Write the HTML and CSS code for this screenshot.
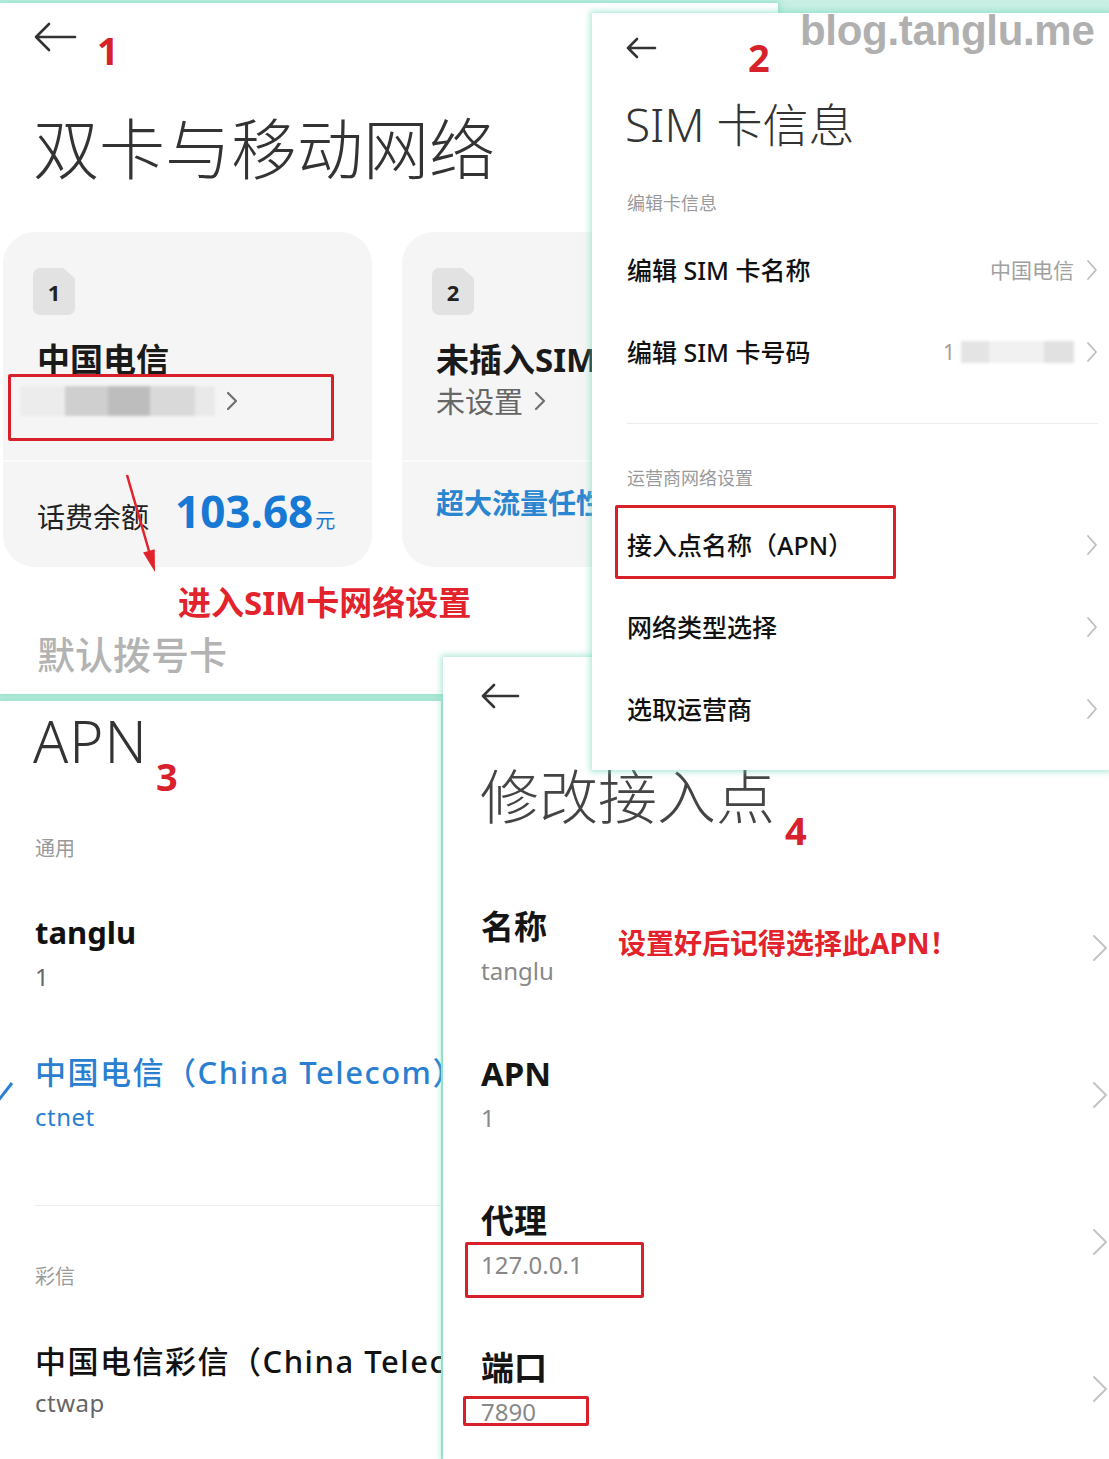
FILE: index.html
```html
<!DOCTYPE html>
<html lang="zh-CN">
<head>
  <meta charset="UTF-8" />
  <title>APN 设置步骤 - blog.tanglu.me</title>
  <meta name="viewport" content="width=device-width, initial-scale=1.0" />
  <link rel="stylesheet" href="styles.css">
</head>

<body>
  <div class="canvas">

    <!-- 1: 双卡与移动网络 -->
    <section class="panel p1">
      <div class="topbar">
        <svg class="back" width="44" height="30" viewBox="0 0 44 30"><path d="M42 15H3M16 2L3 15l13 13" /></svg>
      </div>
      <h1 class="big-title">双卡与移动网络</h1>

      <div class="cards">
        <div class="sim-card">
          <div class="sim-top">
            <div class="sim-badge">1</div>
            <div class="sim-name">中国电信</div>
            <div class="sim-sub">
              <span class="blur-num">
                <i style="width: 45px; background: #ececec"></i>
                <i style="width: 43px; background: #cfcfcf"></i>
                <i style="width: 42px; background: #bdbdbd"></i>
                <i style="width: 45px; background: #d9d9d9"></i>
                <i style="width: 20px; background: #e9e9e9"></i>
              </span>
              <svg class="chev dark" width="14" height="22" viewBox="0 0 14 22"><path d="M3 3l8 8-8 8" /></svg>
            </div>
          </div>
          <div class="sim-bottom">
            <span class="balance-label">话费余额</span>
            <span class="balance-value">103.68</span>
            <span class="balance-unit">元</span>
          </div>
        </div>

        <div class="sim-card">
          <div class="sim-top">
            <div class="sim-badge">2</div>
            <div class="sim-name">未插入SIM卡</div>
            <div class="sim-sub">
              <span class="sim-empty">未设置</span>
              <svg class="chev dark" width="14" height="22" viewBox="0 0 14 22"><path d="M3 3l8 8-8 8" /></svg>
            </div>
          </div>
          <div class="sim-bottom">
            <span class="promo">超大流量任性用</span>
          </div>
        </div>
      </div>

      <h2 class="section-faded">默认拨号卡</h2>

      <div class="step-no step-1">1</div>
      <div class="mark-box box-p1"></div>
      <svg class="mark-arrow" width="200" height="130" viewBox="0 0 200 130">
        <path class="shaft" d="M127 472L149 548" transform="translate(0 -450)" />
        <path class="head" d="M155 569L154.7 546.2 143.1 549.6Z" transform="translate(0 -450)" />
      </svg>
      <div class="mark-text text-p1">进入SIM卡网络设置</div>
    </section>

    <!-- 3: APN 列表 -->
    <section class="panel p3">
      <h1 class="apn-title">APN</h1>
      <div class="list-label first">通用</div>

      <div class="apn-item">
        <div class="apn-name">tanglu</div>
        <div class="apn-sub">1</div>
      </div>
      <div class="apn-item selected">
        <div class="apn-name">中国电信（China Telecom）</div>
        <div class="apn-sub">ctnet</div>
      </div>

      <div class="divider"></div>
      <div class="list-label second">彩信</div>

      <div class="apn-item mms">
        <div class="apn-name">中国电信彩信（China Telecom）</div>
        <div class="apn-sub">ctwap</div>
      </div>

      <svg class="check" width="14" height="24" viewBox="0 0 14 24"><path d="M-2 21L12 3" /></svg>
      <div class="step-no step-3">3</div>
    </section>

    <!-- 4: 修改接入点 -->
    <section class="panel p4">
      <div class="topbar">
        <svg class="back" width="40" height="26" viewBox="0 0 40 26"><path d="M38 13H3M14 2L3 13l11 11" /></svg>
      </div>
      <h1 class="edit-title">修改接入点</h1>

      <div class="field-list">
        <div class="field">
          <div class="field-text">
            <div class="field-name">名称</div>
            <div class="field-value">tanglu</div>
          </div>
          <svg class="chev big" width="18" height="28" viewBox="0 0 18 28"><path d="M3 2l12 12-12 12" /></svg>
        </div>
        <div class="field">
          <div class="field-text">
            <div class="field-name">APN</div>
            <div class="field-value">1</div>
          </div>
          <svg class="chev big" width="18" height="28" viewBox="0 0 18 28"><path d="M3 2l12 12-12 12" /></svg>
        </div>
        <div class="field">
          <div class="field-text">
            <div class="field-name">代理</div>
            <div class="field-value">127.0.0.1</div>
          </div>
          <svg class="chev big" width="18" height="28" viewBox="0 0 18 28"><path d="M3 2l12 12-12 12" /></svg>
        </div>
        <div class="field">
          <div class="field-text">
            <div class="field-name">端口</div>
            <div class="field-value">7890</div>
          </div>
          <svg class="chev big" width="18" height="28" viewBox="0 0 18 28"><path d="M3 2l12 12-12 12" /></svg>
        </div>
      </div>

      <div class="step-no step-4">4</div>
      <div class="mark-text text-p4">设置好后记得选择此APN！</div>
      <div class="mark-box box-proxy"></div>
      <div class="mark-box box-port"></div>
    </section>

    <!-- 2: SIM 卡信息 -->
    <section class="panel p2">
      <div class="topbar">
        <svg class="back" width="32" height="22" viewBox="0 0 32 22"><path d="M30 11H3M12 2L3 11l9 9" /></svg>
      </div>
      <h1 class="sim-title">SIM 卡信息</h1>

      <div class="group-label first">编辑卡信息</div>
      <div class="set-row">
        <span class="set-name">编辑 SIM 卡名称</span>
        <span class="set-value">中国电信</span>
        <svg class="chev" width="12" height="22" viewBox="0 0 12 22"><path d="M2 2l8 9-8 9" /></svg>
      </div>
      <div class="set-row">
        <span class="set-name">编辑 SIM 卡号码</span>
        <span class="set-value">1<span class="blur-num small">
          <i style="width: 28px; background: #e4e4e4"></i>
          <i style="width: 55px; background: #f1f1f1"></i>
          <i style="width: 30px; background: #e1e1e1"></i>
        </span></span>
        <svg class="chev" width="12" height="22" viewBox="0 0 12 22"><path d="M2 2l8 9-8 9" /></svg>
      </div>

      <div class="divider"></div>

      <div class="group-label second">运营商网络设置</div>
      <div class="set-row">
        <span class="set-name">接入点名称（APN）</span>
        <svg class="chev" width="12" height="22" viewBox="0 0 12 22"><path d="M2 2l8 9-8 9" /></svg>
      </div>
      <div class="set-row">
        <span class="set-name">网络类型选择</span>
        <svg class="chev" width="12" height="22" viewBox="0 0 12 22"><path d="M2 2l8 9-8 9" /></svg>
      </div>
      <div class="set-row">
        <span class="set-name">选取运营商</span>
        <svg class="chev" width="12" height="22" viewBox="0 0 12 22"><path d="M2 2l8 9-8 9" /></svg>
      </div>

      <div class="step-no step-2">2</div>
      <div class="mark-box box-apn"></div>
    </section>

    <div class="watermark">blog.tanglu.me</div>
  </div>
</body>
</html>
```

FILE: styles.css
```css
html, body {
  margin: 0;
  padding: 0;
}

body {
  background: #c9efe4;
  font-family: "Noto Sans", "Noto Sans CJK SC", sans-serif;
  color: #1a1a1a;
}

h1, h2 {
  margin: 0;
}

.canvas {
  position: relative;
  width: 1109px;
  height: 1459px;
  overflow: hidden;
  background: #c9efe4;
}

/* each screenshot is a window on the collage */
.panel {
  position: absolute;
  background: #fff;
  box-shadow: 0 0 6px 2px rgba(110, 215, 185, 0.55);
  overflow: hidden;
}

.p1 { left: 0; top: 3px; width: 778px; height: 691px; z-index: 1; }
.p3 { left: 0; top: 701px; width: 441px; height: 758px; z-index: 2; }
.p4 { left: 443px; top: 657px; width: 666px; height: 802px; z-index: 3; }
.p2 { left: 592px; top: 13px; width: 517px; height: 757px; z-index: 4; }

.back {
  display: block;
  fill: none;
  stroke: #333;
  stroke-width: 2.6;
  stroke-linecap: round;
  stroke-linejoin: round;
}

.chev {
  display: block;
  flex-shrink: 0;
  fill: none;
  stroke: #bdbdbd;
  stroke-width: 1.8;
  stroke-linecap: round;
  stroke-linejoin: round;
}

.chev.dark {
  stroke: #6f6f6f;
  stroke-width: 2.2;
}

.chev.big {
  stroke: #c4c4c4;
  stroke-width: 2;
}

/* annotations drawn over the screenshots */
.step-no {
  position: absolute;
  font-size: 38px;
  line-height: 1;
  font-weight: bold;
  color: #d7222c;
}

.step-1 { left: 97px; top: 28px; }
.step-2 { left: 156px; top: 25px; }
.step-3 { left: 156px; top: 56px; }
.step-4 { left: 342px; top: 154px; }

.mark-box {
  position: absolute;
  border: 3px solid #d8202b;
  border-radius: 2px;
  box-sizing: border-box;
}

.box-p1 { left: 8px; top: 371px; width: 326px; height: 67px; }
.box-apn { left: 23px; top: 492px; width: 281px; height: 74px; }
.box-proxy { left: 22px; top: 585px; width: 179px; height: 56px; }
.box-port { left: 20px; top: 739px; width: 126px; height: 30px; }

.mark-text {
  position: absolute;
  font-weight: bold;
  line-height: 1;
  color: #e2232c;
  white-space: nowrap;
}

.text-p1 { left: 178px; top: 583px; font-size: 33px; }
.text-p4 { left: 175px; top: 272px; font-size: 28px; }

.mark-arrow {
  position: absolute;
  left: 0;
  top: 450px;
}

.mark-arrow .shaft {
  stroke: #e2232c;
  stroke-width: 2.5;
  fill: none;
}

.mark-arrow .head {
  fill: #e2232c;
}

/* panel 1 */
.p1 .topbar {
  padding: 19px 0 0 33px;
  height: 30px;
}

.big-title {
  margin: 63px 0 0 33px;
  font-size: 66px;
  line-height: 1;
  font-weight: 300;
  color: #333;
}

.cards {
  display: flex;
  gap: 30px;
  margin: 51px 0 0 3px;
}

.sim-card {
  flex-shrink: 0;
  width: 369px;
  height: 335px;
  border-radius: 32px;
  background: #f5f5f5;
  overflow: hidden;
}

.sim-top {
  height: 228px;
  box-sizing: border-box;
  padding: 36px 0 0 34px;
}

.sim-badge {
  width: 42px;
  height: 47px;
  margin-left: -4px;
  border-radius: 7px;
  background: #e2e2e2;
  clip-path: polygon(0 0, 72% 0, 100% 22%, 100% 100%, 0 100%);
  display: flex;
  align-items: center;
  justify-content: center;
  font-size: 22px;
  font-weight: bold;
  color: #222;
}

.sim-name {
  margin-top: 28px;
  font-size: 33px;
  line-height: 1;
  font-weight: bold;
  color: #1a1a1a;
  white-space: nowrap;
}

.sim-sub {
  margin-top: 10px;
  height: 30px;
  display: flex;
  align-items: center;
  gap: 10px;
}

.blur-num {
  display: flex;
  height: 30px;
  margin-left: -17px;
  filter: blur(1.5px);
}

.blur-num i {
  display: block;
  height: 100%;
}

.sim-empty {
  font-size: 29px;
  line-height: 1;
  color: #666;
}

.sim-bottom {
  border-top: 2px solid #fbfbfb;
  padding: 27px 0 0 34px;
  display: flex;
  align-items: baseline;
  white-space: nowrap;
}

.balance-label {
  font-size: 28px;
  line-height: 1;
  color: #222;
  margin-right: 26px;
}

.balance-value {
  font-size: 44px;
  line-height: 1;
  font-weight: bold;
  color: #1779d3;
}

.balance-unit {
  font-size: 20px;
  line-height: 1;
  color: #1779d3;
  margin-left: 2px;
}

.promo {
  font-size: 28px;
  line-height: 1;
  font-weight: bold;
  color: #2a86d0;
}

.section-faded {
  margin: 68px 0 0 37px;
  font-size: 38px;
  line-height: 1;
  font-weight: 500;
  color: #b3b3b3;
}

/* panel 2 */
.p2 .topbar {
  padding: 24px 0 0 33px;
  height: 22px;
}

.sim-title {
  margin: 42px 0 0 33px;
  font-size: 46px;
  line-height: 1;
  font-weight: 300;
  color: #333;
}

.group-label {
  margin-left: 35px;
  font-size: 18px;
  line-height: 1;
  color: #9a9a9a;
}

.group-label.first { margin-top: 47px; }
.group-label.second { margin-top: 45px; }

.set-row {
  height: 82px;
  display: flex;
  align-items: center;
  padding: 0 11px 0 35px;
}

.group-label + .set-row {
  margin-top: 17px;
}

.set-name {
  flex: 1;
  font-size: 25px;
  line-height: 1;
  font-weight: 500;
  color: #111;
}

.set-value {
  display: flex;
  align-items: center;
  margin-right: 12px;
  font-size: 21px;
  line-height: 1;
  color: #a0a0a0;
}

.blur-num.small {
  height: 22px;
  margin-left: 6px;
}

.p2 .divider {
  height: 1px;
  margin: 30px 11px 0 35px;
  background: #ececec;
}

/* panel 3 */
.apn-title {
  margin: 11px 0 0 33px;
  font-size: 58px;
  line-height: 1;
  font-weight: 300;
  color: #333;
  letter-spacing: 1px;
}

.list-label {
  margin-left: 35px;
  font-size: 20px;
  line-height: 1;
  color: #9a9a9a;
}

.list-label.first { margin-top: 69px; }
.list-label.second { margin-top: 61px; }

.apn-item {
  margin-left: 35px;
  white-space: nowrap;
}

.apn-name {
  font-size: 31px;
  line-height: 1;
  font-weight: bold;
  color: #111;
}

.apn-sub {
  margin-top: 17px;
  font-size: 24px;
  line-height: 1;
  color: #666;
  letter-spacing: 0.5px;
}

.list-label.first + .apn-item { margin-top: 58px; }
.apn-item + .apn-item { margin-top: 68px; }

.apn-item.selected .apn-name {
  font-weight: 500;
  color: #2a7fd1;
  letter-spacing: 1.5px;
}

.apn-item.selected .apn-sub {
  color: #2a7fd1;
}

.apn-item.mms {
  margin-top: 59px;
}

.apn-item.mms .apn-name {
  font-weight: 500;
  letter-spacing: 1.5px;
}

.apn-item.mms .apn-sub {
  margin-top: 14px;
}

.p3 .divider {
  height: 1px;
  margin: 76px 0 0 35px;
  background: #ececec;
}

.check {
  position: absolute;
  left: 0;
  top: 379px;
  fill: none;
  stroke: #2a7fd1;
  stroke-width: 3;
}

/* panel 4 */
.p4 .topbar {
  padding: 26px 0 0 37px;
  height: 26px;
}

.edit-title {
  margin: 58px 0 0 37px;
  font-size: 59px;
  line-height: 1;
  font-weight: 300;
  color: #444;
}

.field-list {
  margin-top: 84px;
}

.field {
  height: 147px;
  display: flex;
  justify-content: space-between;
  align-items: flex-start;
  padding-left: 38px;
}

.field-name {
  font-size: 33px;
  line-height: 1;
  font-weight: bold;
  color: #151515;
}

.field-value {
  margin-top: 16px;
  font-size: 24px;
  line-height: 1;
  color: #888;
}

.field .chev {
  margin-top: 24px;
}

.watermark {
  position: absolute;
  left: 800px;
  top: 10px;
  z-index: 5;
  font-family: "Liberation Sans", Arial, sans-serif;
  font-size: 42px;
  line-height: 1;
  font-weight: bold;
  letter-spacing: -0.3px;
  color: #b0b0b0;
}
```
